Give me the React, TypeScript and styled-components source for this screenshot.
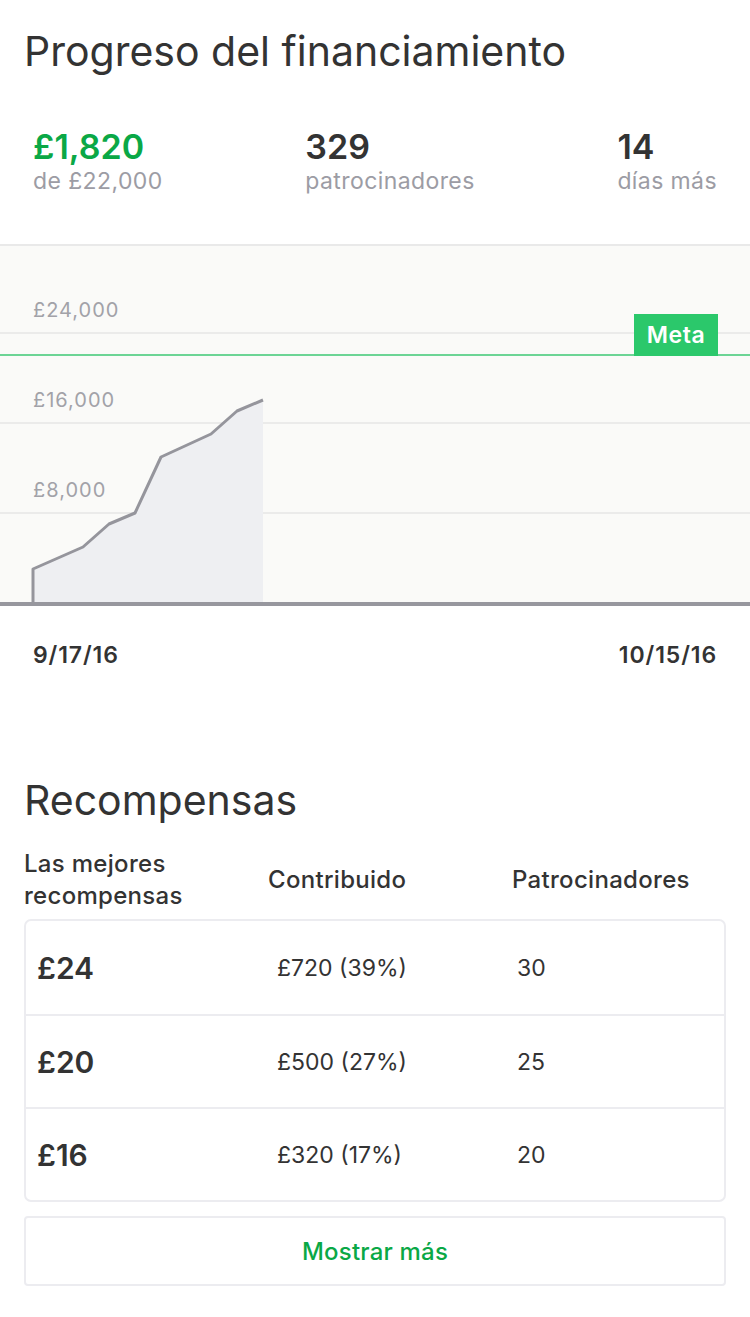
import React from "react";
import styled, { createGlobalStyle } from "styled-components";

const FONT = `Inter, Roboto, "Liberation Sans", sans-serif`;

const GlobalStyle = createGlobalStyle`
  html, body { margin: 0; padding: 0; background: #ffffff; }
  body { font-family: ${FONT}; color: #333333; -webkit-font-smoothing: antialiased; }
  * { box-sizing: border-box; }
`;

const Page = styled.div`
  width: 750px;
  background: #ffffff;
  padding-bottom: 33px;
`;

const SectionTitle = styled.h1<{ $top: number }>`
  margin: 0;
  padding: ${(p) => p.$top}px 24px 0;
  font-size: 41px;
  line-height: 50px;
  font-weight: 400;
  color: #333333;
`;

const Stats = styled.div`
  display: flex;
  justify-content: space-between;
  padding: 51px 33px 0;
`;

const Stat = styled.div`
  display: flex;
  flex-direction: column;
`;

const StatValue = styled.div<{ $green?: boolean }>`
  font-size: 34px;
  line-height: 40px;
  font-weight: 600;
  color: ${(p) => (p.$green ? "#0aa846" : "#333333")};
`;

const StatLabel = styled.div`
  font-size: 23px;
  line-height: 28px;
  letter-spacing: 0.4px;
  color: #9c9ca4;
`;

const ChartWrap = styled.div`
  position: relative;
  margin-top: 49px;
  border-top: 2px solid #e9e9e9;
  background: #fafaf8;
  height: 362px;
`;

const ChartSvg = styled.svg`
  display: block;
`;

const GoalBadge = styled.div`
  position: absolute;
  left: 634px;
  top: 68px;
  width: 84px;
  height: 42px;
  background: #2bc86b;
  color: #ffffff;
  font-size: 23px;
  letter-spacing: 0.6px;
  font-weight: 600;
  display: flex;
  align-items: center;
  justify-content: center;
`;

const Dates = styled.div`
  display: flex;
  justify-content: space-between;
  padding: 35px 33px 0;
  font-size: 23px;
  line-height: 28px;
  letter-spacing: 0.9px;
  font-weight: 600;
  color: #333333;
`;

const TableHead = styled.div`
  display: grid;
  grid-template-columns: 244px 244px 1fr;
  align-items: center;
  padding: 23px 24px 0;
  font-size: 24px;
  line-height: 32px;
  letter-spacing: 0.3px;
  font-weight: 500;
  color: #333333;
`;

const Card = styled.div`
  margin: 7px 24px 0;
  border: 2px solid #ececf0;
  border-radius: 7px;
`;

const Row = styled.div`
  display: grid;
  grid-template-columns: 240px 240px 1fr;
  align-items: center;
  height: 93px;
  padding-left: 11px;
  & + & {
    border-top: 2px solid #ececf0;
  }
`;

const Amount = styled.div`
  font-size: 30px;
  font-weight: 600;
  color: #333333;
`;

const Cell = styled.div`
  font-size: 23px;
  color: #333333;
`;

const MoreButton = styled.button`
  display: block;
  width: 702px;
  height: 70px;
  margin: 14px 24px 0;
  border: 2px solid #ececf0;
  border-radius: 4px;
  background: #ffffff;
  color: #0aa846;
  font-family: ${FONT};
  font-size: 24px;
  letter-spacing: 0.2px;
  font-weight: 500;
  cursor: pointer;
`;

const points: [number, number][] = [
  [33, 357],
  [33, 323],
  [83, 301],
  [109, 278],
  [135, 267],
  [161, 211],
  [211, 188],
  [237, 165],
  [263, 154],
];

const gridLines = [
  { y: 87, label: "£24,000" },
  { y: 177, label: "£16,000" },
  { y: 267, label: "£8,000" },
];

const rewards = [
  { amount: "£24", contributed: "£720 (39%)", backers: "30" },
  { amount: "£20", contributed: "£500 (27%)", backers: "25" },
  { amount: "£16", contributed: "£320 (17%)", backers: "20" },
];

export default function App() {
  const line = points.map(([x, y]) => `${x},${y}`).join(" ");
  const area = `${line} 263,357 33,357`;
  return (
    <Page>
      <GlobalStyle />
      <SectionTitle $top={26}>Progreso del financiamiento</SectionTitle>
      <Stats>
        <Stat>
          <StatValue $green>£1,820</StatValue>
          <StatLabel>de £22,000</StatLabel>
        </Stat>
        <Stat>
          <StatValue>329</StatValue>
          <StatLabel>patrocinadores</StatLabel>
        </Stat>
        <Stat>
          <StatValue>14</StatValue>
          <StatLabel>días más</StatLabel>
        </Stat>
      </Stats>
      <ChartWrap>
        <ChartSvg width={750} height={360} viewBox="0 0 750 360">
          {gridLines.map((g) => (
            <g key={g.label}>
              <line x1={0} x2={750} y1={g.y} y2={g.y} stroke="#ebebea" strokeWidth={2} />
              <text
                x={33}
                y={g.y - 16}
                fontFamily={FONT}
                fontSize={20}
                letterSpacing={1}
                fill="#a2a2a8"
              >
                {g.label}
              </text>
            </g>
          ))}
          <polygon points={area} fill="#eeeff2" />
          <line x1={0} x2={750} y1={109} y2={109} stroke="#3cc774" strokeWidth={1.5} />
          <polyline
            points={line}
            fill="none"
            stroke="#95959c"
            strokeWidth={3}
            strokeLinejoin="round"
          />
          <rect x={0} y={356} width={750} height={4} fill="#97979e" />
        </ChartSvg>
        <GoalBadge>Meta</GoalBadge>
      </ChartWrap>
      <Dates>
        <span>9/17/16</span>
        <span>10/15/16</span>
      </Dates>
      <SectionTitle $top={106}>Recompensas</SectionTitle>
      <TableHead>
        <div>
          Las mejores
          <br />
          recompensas
        </div>
        <div>Contribuido</div>
        <div>Patrocinadores</div>
      </TableHead>
      <Card>
        {rewards.map((r) => (
          <Row key={r.amount}>
            <Amount>{r.amount}</Amount>
            <Cell>{r.contributed}</Cell>
            <Cell>{r.backers}</Cell>
          </Row>
        ))}
      </Card>
      <MoreButton>Mostrar más</MoreButton>
    </Page>
  );
}
